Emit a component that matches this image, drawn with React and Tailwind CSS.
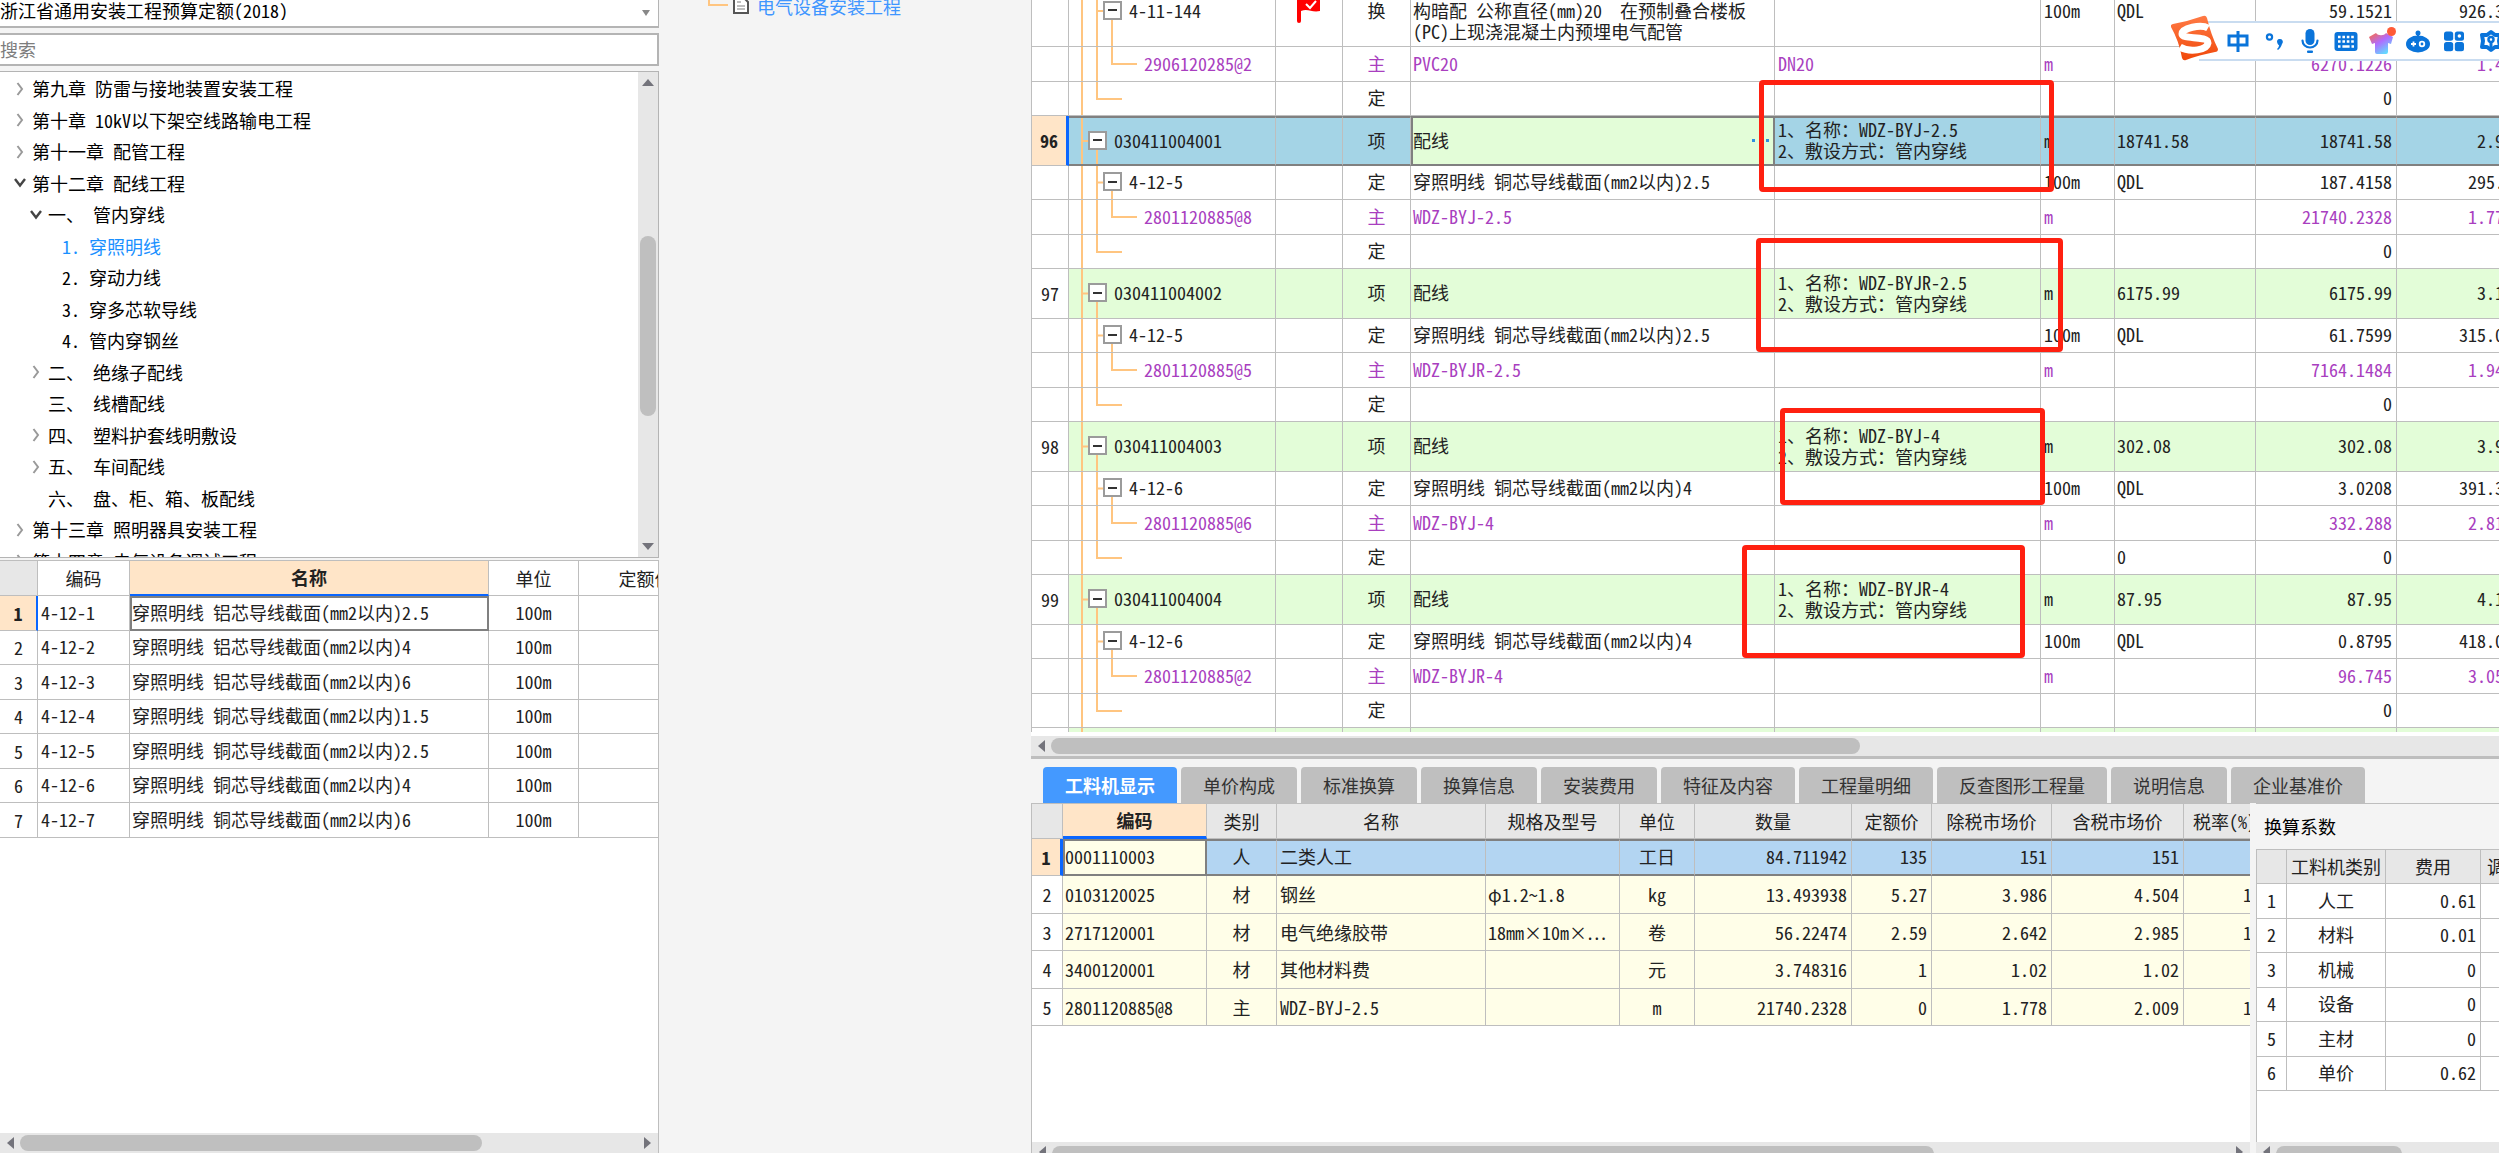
import { useState } from 'react'

const treeItems = [
  { level: 0, state: 'closed', text: '第九章 防雷与接地装置安装工程' },
  { level: 0, state: 'closed', text: '第十章 10kV以下架空线路输电工程' },
  { level: 0, state: 'closed', text: '第十一章 配管工程' },
  { level: 0, state: 'open', text: '第十二章 配线工程' },
  { level: 1, state: 'open', no: '一、', text: '管内穿线' },
  { level: 2, no: '1.', text: '穿照明线' },
  { level: 2, no: '2.', text: '穿动力线' },
  { level: 2, no: '3.', text: '穿多芯软导线' },
  { level: 2, no: '4.', text: '管内穿钢丝' },
  { level: 1, state: 'closed', no: '二、', text: '绝缘子配线' },
  { level: 1, no: '三、', text: '线槽配线' },
  { level: 1, state: 'closed', no: '四、', text: '塑料护套线明敷设' },
  { level: 1, state: 'closed', no: '五、', text: '车间配线' },
  { level: 1, no: '六、', text: '盘、柜、箱、板配线' },
  { level: 0, state: 'closed', text: '第十三章 照明器具安装工程' },
  { level: 0, state: 'closed', text: '第十四章 电气设备调试工程' },
]

const quotas = [
  ['4-12-1', '穿照明线 铝芯导线截面(mm2以内)2.5'],
  ['4-12-2', '穿照明线 铝芯导线截面(mm2以内)4'],
  ['4-12-3', '穿照明线 铝芯导线截面(mm2以内)6'],
  ['4-12-4', '穿照明线 铜芯导线截面(mm2以内)1.5'],
  ['4-12-5', '穿照明线 铜芯导线截面(mm2以内)2.5'],
  ['4-12-6', '穿照明线 铜芯导线截面(mm2以内)4'],
  ['4-12-7', '穿照明线 铜芯导线截面(mm2以内)6'],
]

// kind: item = bill item, quota = quota line, main = main material, blank = empty quota line
const billRows = [
  { kind: 'quota', tall: true, code: '4-11-144', flag: true, type: '换', name: '\n构暗配 公称直径(mm)20  在预制叠合楼板\n(PC)上现浇混凝土内预埋电气配管', unit: '100m', expr: 'QDL', qty: '59.1521', price: '926.35' },
  { kind: 'main', code: '2906120285@2', type: '主', name: 'PVC20', spec: 'DN20', unit: 'm', qty: '6270.1226', price: '1.42' },
  { kind: 'blank', type: '定', qty: '0' },
  { kind: 'item', selected: true, no: '96', code: '030411004001', type: '项', name: '配线', spec: '1、名称：WDZ-BYJ-2.5\n2、敷设方式：管内穿线', unit: 'm', expr: '18741.58', qty: '18741.58', price: '2.95' },
  { kind: 'quota', code: '4-12-5', type: '定', name: '穿照明线 铜芯导线截面(mm2以内)2.5', unit: '100m', expr: 'QDL', qty: '187.4158', price: '295.2' },
  { kind: 'main', code: '2801120885@8', type: '主', name: 'WDZ-BYJ-2.5', unit: 'm', qty: '21740.2328', price: '1.778' },
  { kind: 'blank', type: '定', qty: '0' },
  { kind: 'item', no: '97', code: '030411004002', type: '项', name: '配线', spec: '1、名称：WDZ-BYJR-2.5\n2、敷设方式：管内穿线', unit: 'm', expr: '6175.99', qty: '6175.99', price: '3.15' },
  { kind: 'quota', code: '4-12-5', type: '定', name: '穿照明线 铜芯导线截面(mm2以内)2.5', unit: '100m', expr: 'QDL', qty: '61.7599', price: '315.02' },
  { kind: 'main', code: '2801120885@5', type: '主', name: 'WDZ-BYJR-2.5', unit: 'm', qty: '7164.1484', price: '1.947' },
  { kind: 'blank', type: '定', qty: '0' },
  { kind: 'item', no: '98', code: '030411004003', type: '项', name: '配线', spec: '1、名称：WDZ-BYJ-4\n2、敷设方式：管内穿线', unit: 'm', expr: '302.08', qty: '302.08', price: '3.91' },
  { kind: 'quota', code: '4-12-6', type: '定', name: '穿照明线 铜芯导线截面(mm2以内)4', unit: '100m', expr: 'QDL', qty: '3.0208', price: '391.35' },
  { kind: 'main', code: '2801120885@6', type: '主', name: 'WDZ-BYJ-4', unit: 'm', qty: '332.288', price: '2.814' },
  { kind: 'blank', type: '定', expr: '0', qty: '0' },
  { kind: 'item', no: '99', code: '030411004004', type: '项', name: '配线', spec: '1、名称：WDZ-BYJR-4\n2、敷设方式：管内穿线', unit: 'm', expr: '87.95', qty: '87.95', price: '4.18' },
  { kind: 'quota', code: '4-12-6', type: '定', name: '穿照明线 铜芯导线截面(mm2以内)4', unit: '100m', expr: 'QDL', qty: '0.8795', price: '418.05' },
  { kind: 'main', code: '2801120885@2', type: '主', name: 'WDZ-BYJR-4', unit: 'm', qty: '96.745', price: '3.052' },
  { kind: 'blank', type: '定', qty: '0' },
  { kind: 'next' },
]

const tabs = ['工料机显示', '单价构成', '标准换算', '换算信息', '安装费用', '特征及内容', '工程量明细', '反查图形工程量', '说明信息', '企业基准价']

const resourceHeads = ['编码', '类别', '名称', '规格及型号', '单位', '数量', '定额价', '除税市场价', '含税市场价', '税率(%)']
const resources = [
  ['0001110003', '人', '二类人工', '', '工日', '84.711942', '135', '151', '151', '0'],
  ['0103120025', '材', '钢丝', 'φ1.2~1.8', 'kg', '13.493938', '5.27', '3.986', '4.504', '13'],
  ['2717120001', '材', '电气绝缘胶带', '18mm×10m×…', '卷', '56.22474', '2.59', '2.642', '2.985', '13'],
  ['3400120001', '材', '其他材料费', '', '元', '3.748316', '1', '1.02', '1.02', '0'],
  ['2801120885@8', '主', 'WDZ-BYJ-2.5', '', 'm', '21740.2328', '0', '1.778', '2.009', '13'],
]

const factors = [
  ['人工', '0.61'],
  ['材料', '0.01'],
  ['机械', '0'],
  ['设备', '0'],
  ['主材', '0'],
  ['单价', '0.62'],
]

const Arrow = ({ dir }) => {
  const paths = {
    up: 'M1 10 L7 3 L13 10 Z',
    down: 'M1 4 L7 11 L13 4 Z',
    left: 'M10 1 L3 7 L10 13 Z',
    right: 'M4 1 L11 7 L4 13 Z',
  }
  return (
    <svg viewBox="0 0 14 14" className="w-3.5 h-3.5 shrink-0" fill="#73737b">
      <path d={paths[dir]} />
    </svg>
  )
}

const HScroll = ({ thumb, noEnd }) => (
  <div className="flex items-center h-5 bg-[#e7e7e7] px-1 shrink-0">
    <Arrow dir="left" />
    <div className="flex-1 px-0.5">
      <div className={`h-4 rounded-full bg-[#bfbfbf] ${thumb}`} />
    </div>
    {!noEnd && <Arrow dir="right" />}
  </div>
)

const Chevron = ({ state }) => {
  if (state === 'open') {
    return (
      <svg viewBox="0 0 14 14" className="w-3.5 h-3.5" fill="none" stroke="#444" strokeWidth="2.4">
        <path d="M2 3 L7 9.5 L12 3" />
      </svg>
    )
  }
  return (
    <svg viewBox="0 0 14 14" className="w-3.5 h-3.5" fill="none" stroke="#9a9a9a" strokeWidth="2">
      <path d="M4.5 1 L9 7 L4.5 13" />
    </svg>
  )
}

const LibraryTree = ({ active, onSelect }) => {
  const indent = ['pl-[13px]', 'pl-[29px]', 'pl-[45px]']
  return (
    <div className="flex-1 min-h-0 flex border border-l-0 border-[#b4b4b4] bg-white overflow-hidden">
      <div className="flex-1 overflow-hidden">
        <ul className="grid auto-rows-fr h-[504px] mt-px">
          {treeItems.map((item) => (
            <li key={item.text} className={`flex items-center ${indent[item.level]}`}>
              {item.level < 2 && (
                <span className="w-[15px] shrink-0">{item.state && <Chevron state={item.state} />}</span>
              )}
              <button
                onClick={() => onSelect(item.text)}
                className={`flex whitespace-pre ${item.level < 2 ? 'pl-1' : 'pl-[17px]'} ${active === item.text ? 'text-[#1a90ff]' : 'text-black'}`}
              >
                {item.no && <span className={item.level === 1 ? 'w-[45px] text-left' : 'w-[27px] text-left'}>{item.no}</span>}
                {item.text}
              </button>
            </li>
          ))}
        </ul>
      </div>
      <div className="w-5 bg-[#e7e7e7] flex flex-col items-center py-1">
        <Arrow dir="up" />
        <div className="flex-1 pt-[146px]">
          <div className="w-4 h-[180px] rounded-full bg-[#bfbfbf]" />
        </div>
        <Arrow dir="down" />
      </div>
    </div>
  )
}

const QuotaTable = () => {
  const cell = 'border-r border-b border-[#bebebe] whitespace-pre'
  return (
    <div className="h-[593px] mt-[2px] flex flex-col bg-white border-t border-r border-[#bebebe]">
      <div className="flex-1 overflow-hidden">
        <table className="table-fixed w-[713px] border-separate border-spacing-0">
          <colgroup>
            <col className="w-[38px]" />
            <col className="w-[92px]" />
            <col className="w-[359px]" />
            <col className="w-[90px]" />
            <col className="w-[134px]" />
          </colgroup>
          <thead>
            <tr className="h-[35px]">
              <th className={`${cell} bg-[#e7e7e7]`} />
              <th className={`${cell} font-normal`}>编码</th>
              <th className="bg-[#ffe5c8] border-r border-r-[#bebebe] border-b-2 border-b-[#0a66ff] font-bold">名称</th>
              <th className={`${cell} font-normal`}>单位</th>
              <th className={`${cell} font-normal`}>定额价</th>
            </tr>
          </thead>
          <tbody>
            {quotas.map(([code, name], i) => (
              <tr key={code} className="odd:h-[35px] even:h-[34px]">
                <td className={i === 0 ? 'bg-[#ffe5c8] border-b border-b-[#bebebe] border-r-2 border-r-[#0a66ff] text-center font-bold' : `${cell} text-center`}>{i + 1}</td>
                <td className={`${cell} pl-[3px] pb-0.5`}>{code}</td>
                <td className={i === 0 ? 'border-2 border-[#808080] pb-0.5 whitespace-pre' : `${cell} pl-0.5 pb-0.5`}>{name}</td>
                <td className={`${cell} text-center pb-0.5`}>100m</td>
                <td className={cell} />
              </tr>
            ))}
          </tbody>
        </table>
      </div>
      <HScroll thumb="w-[462px]" />
    </div>
  )
}

// connector lines of the bill tree, drawn under the code cell
const Branch = ({ kind }) => (
  <svg className="absolute inset-0 w-full h-full" stroke="#ffc580" strokeWidth="2">
    <line x1="13" y1="0" x2="13" y2="100%" />
    {kind === 'item' && <line x1="13" y1="50%" x2="20" y2="50%" />}
    {kind === 'item' && <line x1="28" y1="50%" x2="28" y2="100%" />}
    {(kind === 'quota' || kind === 'main') && <line x1="28" y1="0" x2="28" y2="100%" />}
    {kind === 'quota' && <line x1="28" y1="50%" x2="34" y2="50%" />}
    {kind === 'quota' && <line x1="43" y1="50%" x2="43" y2="100%" />}
    {kind === 'main' && <polyline points="43,0 43,17 68,17" fill="none" />}
    {kind === 'blank' && <polyline points="28,0 28,17 53,17" fill="none" />}
  </svg>
)

const CodeCell = ({ row }) => {
  const pad = { item: 'pl-[19px]', quota: 'pl-[34px]', main: 'pl-[75px]', blank: '', next: '' }
  const fold = row.kind === 'item' || row.kind === 'quota'
  return (
    <div className={`relative flex items-center gap-[7px] ${pad[row.kind]}`}>
      {fold && (
        <button aria-label="折叠" className="w-[19px] h-[19px] border-2 border-[#9b9b9b] bg-white flex items-center justify-center">
          <span className="w-[9px] h-[2px] bg-[#333]" />
        </button>
      )}
      {row.code}
    </div>
  )
}

const Flag = () => (
  <svg viewBox="0 0 26 26" className="w-[26px] h-[26px]">
    <path d="M1 0h4v24a2 2 0 0 1-4 0Z" fill="#f00" />
    <path d="M5 1c6-2 9 2 19 0v13c-8 2-12-3-19 0Z" fill="#f00" />
    <path d="M10 7l4 4 6-7" fill="none" stroke="#fff" strokeWidth="2" />
  </svg>
)

const rowHeight = { item: 'h-[50px]', quota: 'h-[34px]', main: 'h-[35px]', blank: 'h-[34px]', next: 'h-[50px]' }

const BillGrid = () => (
  <div className="flex-1 min-h-0 overflow-hidden bg-white border-l border-[#bebebe]">
    <table className="table-fixed w-[1486px] -mt-6 border-separate border-spacing-0">
      <colgroup>
        <col className="w-[37px]" />
        <col className="w-[207px]" />
        <col className="w-[67px]" />
        <col className="w-[68px]" />
        <col className="w-[364px]" />
        <col className="w-[266px]" />
        <col className="w-[74px]" />
        <col className="w-[141px]" />
        <col className="w-[141px]" />
        <col className="w-[121px]" />
      </colgroup>
      <tbody>
        {billRows.map((row, i) => {
          const green = row.kind === 'item' || row.kind === 'next'
          const bg = row.selected ? 'bg-[#a4d4e6]' : green ? 'bg-[#e3fdd8]' : ''
          const edge = row.selected ? 'border-y-2 border-y-[#808080]' : 'border-b border-b-[#bebebe]'
          const cell = `border-r border-r-[#bebebe] whitespace-pre pb-0.5 ${edge} ${bg}`
          return (
            <tr key={i} className={`${row.tall ? 'h-[71px]' : rowHeight[row.kind]} ${row.kind === 'main' ? 'text-[#a93fbf]' : ''}`}>
              <td className={row.selected ? 'bg-[#ffe5c8] border-r-[3px] border-r-[#0a66ff] border-b border-b-[#bebebe] text-center font-bold' : 'border-r border-b border-[#bebebe] text-center'}>{row.no}</td>
              <td className={`relative ${cell}`}>
                <Branch kind={row.kind} />
                <CodeCell row={row} />
              </td>
              <td className={cell}>{row.flag && <div className="flex justify-center"><Flag /></div>}</td>
              <td className={`${cell} text-center`}>{row.type}</td>
              {row.selected ? (
                <td className="border-2 border-[#808080] bg-[#e3fdd8] pb-0.5">
                  <div className="flex justify-between items-center">
                    {row.name}
                    <button aria-label="更多" className="flex gap-1 pr-1">
                      <span className="w-[3px] h-[3px] bg-[#2f8fe0]" />
                      <span className="w-[3px] h-[3px] bg-[#2f8fe0]" />
                      <span className="w-[3px] h-[3px] bg-[#2f8fe0]" />
                    </button>
                  </div>
                </td>
              ) : (
                <td className={`${cell} pl-0.5`}>{row.name}</td>
              )}
              <td className={`${cell} pl-[3px]`}>{row.spec}</td>
              <td className={`${cell} pl-[3px]`}>{row.unit}</td>
              <td className={`${cell} pl-0.5`}>{row.expr}</td>
              <td className={`${cell} pr-1 text-right`}>{row.qty}</td>
              <td className={`${cell} pr-1 text-right`}>{row.price}</td>
            </tr>
          )
        })}
      </tbody>
    </table>
  </div>
)

const ResourceTable = () => {
  const cell = 'border-r border-b border-[#bebebe] whitespace-pre'
  const align = ['pl-0.5', 'text-center', 'pl-[3px]', 'pl-0.5', 'text-center', 'text-right pr-1', 'text-right pr-1', 'text-right pr-1', 'text-right pr-1', 'text-right pr-1']
  return (
    <div className="flex-1 min-w-0 flex flex-col bg-white border-l border-t border-[#bebebe]">
      <div className="flex-1 overflow-hidden">
        <table className="table-fixed w-[1234px] border-separate border-spacing-0">
          <colgroup>
            <col className="w-[31px]" />
            <col className="w-[144px]" />
            <col className="w-[70px]" />
            <col className="w-[209px]" />
            <col className="w-[134px]" />
            <col className="w-[75px]" />
            <col className="w-[157px]" />
            <col className="w-[80px]" />
            <col className="w-[120px]" />
            <col className="w-[132px]" />
            <col className="w-[82px]" />
          </colgroup>
          <thead>
            <tr className="h-[35px] bg-[#e7e7e7]">
              <th className={cell} />
              {resourceHeads.map((head, i) => (
                <th key={head} className={i === 0 ? 'bg-[#ffe5c8] border-r border-r-[#bebebe] border-b-[3px] border-b-[#0a66ff] font-bold' : `${cell} font-normal`}>{head}</th>
              ))}
            </tr>
          </thead>
          <tbody>
            {resources.map((row, i) => (
              <tr key={row[0]} className="odd:h-[37px] even:h-[38px]">
                <td className={i === 0 ? 'bg-[#ffe5c8] border-r-[3px] border-r-[#0a66ff] border-b border-b-[#bebebe] text-center font-bold' : `${cell} text-center`}>{i + 1}</td>
                {row.map((value, j) => {
                  let style = `${cell} bg-[#fffee8] ${align[j]}`
                  if (i === 0) style = `border-y-2 border-y-[#808080] border-r border-r-[#bebebe] bg-[#b3d5f2] pb-0.5 ${align[j]}`
                  if (i === 0 && j === 0) style = 'border-2 border-[#808080] bg-[#fffee8] pb-0.5'
                  return <td key={j} className={style}>{value}</td>
                })}
              </tr>
            ))}
          </tbody>
        </table>
      </div>
      <div className="h-[11px] overflow-hidden">
        <HScroll thumb="w-[882px] mt-1" />
      </div>
    </div>
  )
}

const FactorPanel = () => {
  const cell = 'border-r border-b border-[#bebebe] whitespace-pre'
  return (
    <div className="w-[243px] shrink-0 flex flex-col bg-white overflow-hidden">
      <h3 className="h-[46px] bg-[#f4f4f4] border-t border-[#bebebe] pl-2 leading-[45px] text-black">换算系数</h3>
      <div className="flex-1 border-t border-l border-[#bebebe]">
        <table className="table-fixed w-[300px] border-separate border-spacing-0">
          <colgroup>
            <col className="w-[30px]" />
            <col className="w-[99px]" />
            <col className="w-[95px]" />
            <col className="w-[76px]" />
          </colgroup>
          <thead>
            <tr className="h-[34px] bg-[#e7e7e7]">
              <th className={cell} />
              <th className={`${cell} font-normal`}>工料机类别</th>
              <th className={`${cell} font-normal`}>费用</th>
              <th className={`${cell} font-normal text-left pl-1.5`}>调整</th>
            </tr>
          </thead>
          <tbody>
            {factors.map(([name, cost], i) => (
              <tr key={name} className="odd:h-[35px] even:h-[34px]">
                <td className={`${cell} text-center pb-0.5`}>{i + 1}</td>
                <td className={`${cell} text-center pb-0.5`}>{name}</td>
                <td className={`${cell} text-right pr-1 pb-0.5`}>{cost}</td>
                <td className={cell} />
              </tr>
            ))}
          </tbody>
        </table>
      </div>
      <div className="h-[11px] overflow-hidden">
        <HScroll thumb="w-[126px] mt-1" noEnd />
      </div>
    </div>
  )
}

const ImeToolbar = () => (
  <div className="absolute right-0 top-[15px] flex items-start h-[46px]">
    <svg viewBox="0 0 48 46" className="relative z-10 w-12 h-[46px]">
      <defs>
        <linearGradient id="sg" x1="0" y1="0" x2="0" y2="1">
          <stop offset="0" stopColor="#ff7a45" />
          <stop offset="1" stopColor="#f0480a" />
        </linearGradient>
      </defs>
      <path d="M2 9 Q18 6 32 1 Q35 0 36 3 Q40 20 47 34 Q47 37 44 37 Q28 40 15 45 Q12 46 11 43 Q8 26 0 12 Q-1 10 2 9 Z" fill="url(#sg)" />
      <path d="M37 13 C30 9 11 13 11 19 C11 25 37 20 37 28 C36 35 19 38 9 32" fill="none" stroke="#fff" strokeWidth="7" />
    </svg>
    <div className="mt-1.5 -ml-5 pl-[21px] flex items-center h-10 bg-white border-y-2 border-[#c9dcf0] text-[#0a74da]">
      <button aria-label="中文" className="w-9 flex justify-center">
        <svg viewBox="0 0 24 24" className="w-6 h-6" fill="none" stroke="currentColor" strokeWidth="3">
          <rect x="3" y="7" width="18" height="9" />
          <path d="M12 2v21" />
        </svg>
      </button>
      <button aria-label="标点" className="w-9 flex justify-center">
        <svg viewBox="0 0 24 24" className="w-6 h-6" fill="none" stroke="currentColor">
          <circle cx="7.5" cy="8" r="2.6" strokeWidth="2.2" />
          <path d="M15 12a3 3 0 1 1 5 3c-1 3-2 4-4 6l-1-1c1-1 2-2 2-4-1 0-2-2-2-4z" fill="currentColor" stroke="none" />
        </svg>
      </button>
      <button aria-label="语音" className="w-9 flex justify-center">
        <svg viewBox="0 0 24 24" className="w-6 h-6" fill="currentColor">
          <rect x="7.5" y="0" width="9" height="16" rx="4.5" />
          <path d="M4.5 11.5a7.5 7 0 0 0 15 0" fill="none" stroke="currentColor" strokeWidth="2.2" strokeLinecap="round" />
          <rect x="9" y="21.5" width="6" height="2.5" rx="1" />
        </svg>
      </button>
      <button aria-label="键盘" className="w-9 flex justify-center">
        <svg viewBox="0 0 24 24" className="w-6 h-6">
          <rect x="0.5" y="3" width="23" height="19" rx="3" fill="currentColor" />
          <path d="M4 8h16M4 12.5h16" stroke="#fff" strokeWidth="2.6" strokeDasharray="2.6 1.8" />
          <path d="M4 17.5h2.5M8.4 17.5h7.2M17.5 17.5h2.5" stroke="#fff" strokeWidth="2.4" />
        </svg>
      </button>
      <button aria-label="皮肤" className="w-9 flex justify-center">
        <svg viewBox="0 0 28 28" className="w-7 h-7">
          <defs>
            <linearGradient id="tee" x1="0" y1="0" x2="0.7" y2="1">
              <stop offset="0" stopColor="#ff6a3c" />
              <stop offset="0.5" stopColor="#b06cff" />
              <stop offset="1" stopColor="#5fe0ff" />
            </linearGradient>
          </defs>
          <path d="M8 6c2 3 8 3 10 0l7 4-2 7-3-1v9a2 2 0 0 1-2 2H9a2 2 0 0 1-2-2v-9l-3 1-3-7z" fill="url(#tee)" />
          <circle cx="23.5" cy="4.5" r="4.5" fill="#ff5a36" />
        </svg>
      </button>
      <button aria-label="游戏" className="w-9 flex justify-center">
        <svg viewBox="0 0 24 24" className="w-6 h-6" fill="currentColor">
          <circle cx="12" cy="4" r="2.5" />
          <rect x="11" y="4" width="2" height="5" />
          <ellipse cx="12" cy="15" rx="12" ry="8.5" />
          <path d="M5 15h5M7.5 12.5v5" stroke="#fff" strokeWidth="1.8" />
          <circle cx="16" cy="15" r="2.3" fill="none" stroke="#fff" strokeWidth="1.8" />
        </svg>
      </button>
      <button aria-label="工具箱" className="w-9 flex justify-center">
        <svg viewBox="0 0 24 24" className="w-6 h-6" fill="currentColor">
          <rect x="2" y="2.5" width="9.2" height="9.2" rx="2.5" />
          <rect x="2" y="13" width="9.2" height="9.2" rx="2.5" />
          <rect x="12.8" y="13" width="9.2" height="9.2" rx="2.5" />
          <rect x="12.8" y="2.5" width="9.2" height="9.2" rx="2.5" />
          <circle cx="17.4" cy="7" r="1.8" fill="#fff" />
        </svg>
      </button>
      <button aria-label="设置" className="w-[27px] flex justify-end overflow-hidden">
        <svg viewBox="0 0 19 24" className="w-[19px] h-6" fill="none" stroke="currentColor">
          <path d="M11 3l4 3h5l-1 6 1 6h-5l-4 3-4-3H2l1-6-1-6h5z" strokeWidth="4" strokeLinejoin="round" />
          <circle cx="11" cy="10.5" r="2.5" strokeWidth="2.5" />
          <path d="M11 13v9" strokeWidth="3" />
        </svg>
      </button>
    </div>
  </div>
)

export default function App() {
  const [active, setActive] = useState('穿照明线')
  const [tab, setTab] = useState('工料机显示')
  const box = 'absolute border-[5px] border-[#ff2010] rounded pointer-events-none'

  return (
    <div className="h-screen flex overflow-hidden bg-[#f4f4f4] text-[18px] leading-[21px] text-[#222] font-['Noto_Sans_Mono_CJK_SC','Noto_Sans_CJK_SC',monospace]">
      <aside className="w-[659px] shrink-0 flex flex-col">
        <div className="relative">
          <select aria-label="定额库" className="block w-full h-7 appearance-none bg-white border-b-2 border-r border-[#b4b4b4] pb-1.5 text-black">
            <option>浙江省通用安装工程预算定额(2018)</option>
          </select>
          <svg viewBox="0 0 8 6" className="absolute right-[9px] top-2.5 w-2 h-1.5 pointer-events-none" fill="#888">
            <path d="M0 0h8L4 6z" />
          </svg>
        </div>
        <input
          aria-label="搜索"
          placeholder="搜索"
          className="mt-[5px] h-[33px] shrink-0 bg-white border-2 border-l-0 border-[#b4b4b4] pb-0.5 placeholder:text-[#7d7d7d] outline-none"
        />
        <div className="h-[5px] shrink-0" />
        <LibraryTree active={active} onSelect={setActive} />
        <QuotaTable />
      </aside>

      <nav className="w-[372px] shrink-0">
        <a href="#install" className="flex pl-[49px] -mt-1 text-[#3f96ff]">
          <svg viewBox="0 0 42 22" className="w-[42px] h-[22px]" fill="none">
            <path d="M1 0v9h19" stroke="#ffc580" strokeWidth="2" />
            <path d="M26 1h9l5 5v11h-14z" fill="#fff" stroke="#555" strokeWidth="2" />
            <path d="M29 6h4M29 10h8M29 13h8" stroke="#aaa" strokeWidth="1.5" />
          </svg>
          <span className="pl-[7px]">电气设备安装工程</span>
        </a>
      </nav>

      <main className="relative flex-1 min-w-0 flex flex-col overflow-hidden">
        <BillGrid />
        <div className="h-1 shrink-0 bg-white" />
        <HScroll thumb="w-[809px]" noEnd />
        <div className="h-[3px] shrink-0 bg-[#bebebe]" />

        <section className="h-[394px] shrink-0 flex flex-col">
          <div className="flex gap-1 pl-3 pt-2">
            {tabs.map((name) => (
              <button
                key={name}
                onClick={() => setTab(name)}
                className={`h-9 px-[22px] rounded-t whitespace-nowrap ${tab === name ? 'bg-[#4499ff] text-white font-bold' : 'bg-[#bfbfbf] text-[#333]'}`}
              >
                {name}
              </button>
            ))}
          </div>
          <div className="flex-1 min-h-0 flex gap-1.5">
            <ResourceTable />
            <FactorPanel />
          </div>
        </section>

        <div className={`${box} left-[728px] top-[80px] w-[295px] h-[112px]`} />
        <div className={`${box} left-[725px] top-[238px] w-[307px] h-[114px]`} />
        <div className={`${box} left-[749px] top-[408px] w-[265px] h-[97px]`} />
        <div className={`${box} left-[711px] top-[545px] w-[283px] h-[113px]`} />
        <ImeToolbar />
      </main>
    </div>
  )
}
